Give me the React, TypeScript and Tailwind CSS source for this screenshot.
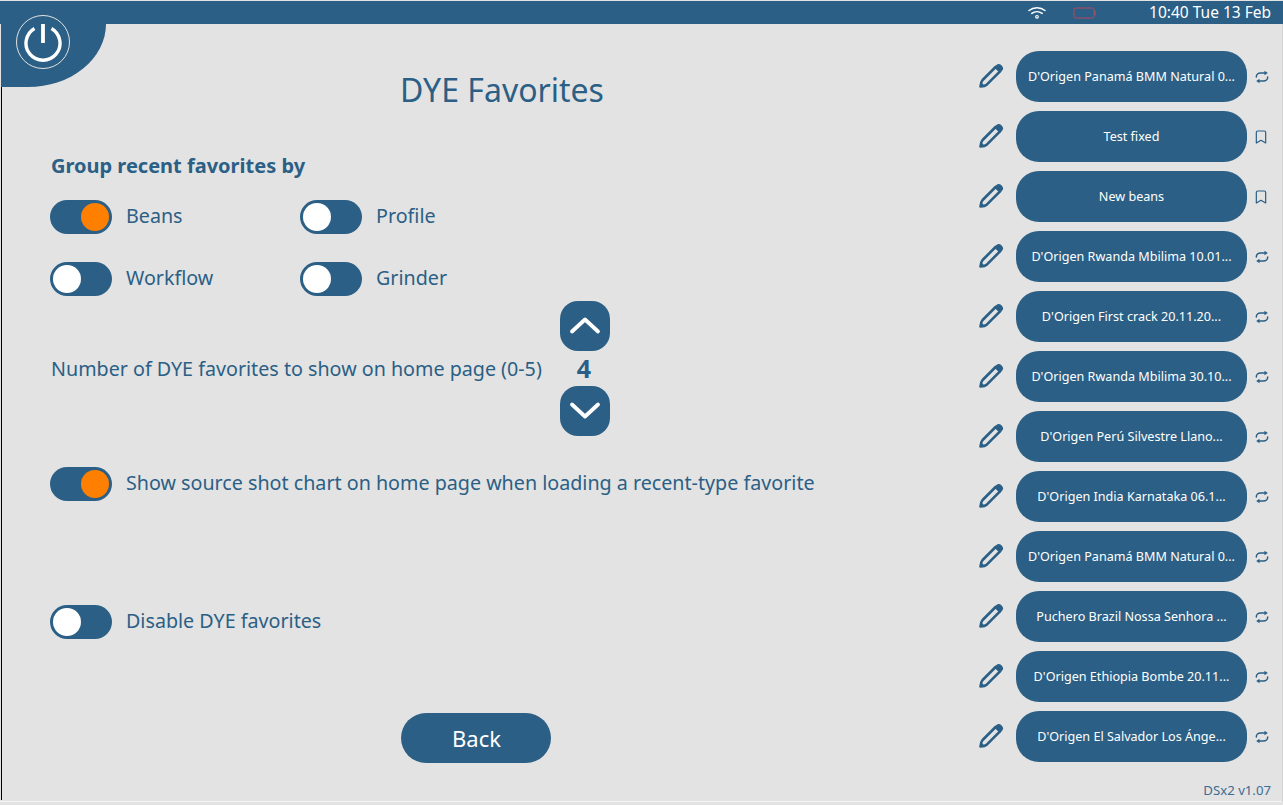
import React from 'react';
import { Bookmark } from 'lucide-react';

const favorites = [
  { name: "D'Origen Panamá BMM Natural 0...", type: 'recent' },
  { name: 'Test fixed', type: 'fixed' },
  { name: 'New beans', type: 'fixed' },
  { name: "D'Origen Rwanda Mbilima 10.01...", type: 'recent' },
  { name: "D'Origen First crack 20.11.20...", type: 'recent' },
  { name: "D'Origen Rwanda Mbilima 30.10...", type: 'recent' },
  { name: "D'Origen Perú Silvestre Llano...", type: 'recent' },
  { name: "D'Origen India Karnataka 06.1...", type: 'recent' },
  { name: "D'Origen Panamá BMM Natural 0...", type: 'recent' },
  { name: 'Puchero Brazil Nossa Senhora ...', type: 'recent' },
  { name: "D'Origen Ethiopia Bombe 20.11...", type: 'recent' },
  { name: "D'Origen El Salvador Los Ánge...", type: 'recent' },
];

const Toggle: React.FC<{ on?: boolean }> = ({ on }) => (
  <div className={`w-[62px] h-[34px] rounded-full bg-[#2b5f85] flex items-center px-[3px] shrink-0 ${on ? 'justify-end' : 'justify-start'}`}>
    <div className={`w-[28px] h-[28px] rounded-full ${on ? 'bg-[#ff8000]' : 'bg-white'}`}></div>
  </div>
);

const ToggleLabel: React.FC<{ on?: boolean; label: string; className?: string }> = ({ on, label, className }) => (
  <div className={`flex items-center gap-[14px] ${className ?? ''}`}>
    <Toggle on={on} />
    <span className="text-[19.7px] leading-[28px] pb-[2px] text-[#2b5f85]">{label}</span>
  </div>
);

const PencilIcon = () => (
  <svg width="27" height="27" viewBox="0 0 27 27" fill="none">
    <path d="M2.5 24.5C2.6 22 3.2 19.6 4.6 18L17.6 5 22 9.4 9 22.4C7.4 23.8 5 24.4 2.5 24.5Z" stroke="#2b5f85" strokeWidth="2.6" strokeLinejoin="round" />
    <path d="M18.5 2.9C19.8 1.6 21.6 1.6 23.2 3.1L24 3.9C25.5 5.4 25.5 7.2 24.2 8.6L22.3 10.4 16.7 4.8Z" fill="#2b5f85" />
    <path d="M2 25L3 20.5C4.2 21 6 22.8 6.5 24Z" fill="#2b5f85" />
  </svg>
);

const SyncIcon = () => (
  <svg width="14" height="14" viewBox="0 0 14 14" fill="none" stroke="#2b5f85" strokeWidth="1.5" strokeLinecap="round">
    <path d="M1.3 7C1.3 4.6 3.2 3 5.5 3H10" />
    <path d="M9.5 .8L12.8 3 9.5 5.2Z" fill="#2b5f85" stroke="none" />
    <path d="M12.7 7C12.7 9.4 10.8 11 8.5 11H4" />
    <path d="M4.5 8.8L1.2 11 4.5 13.2Z" fill="#2b5f85" stroke="none" />
  </svg>
);

const App: React.FC = () => {
  return (
    <div className="w-[1283px] h-[805px] bg-[#e3e3e3] relative overflow-hidden flex flex-col font-['Noto_Sans',sans-serif] text-[#2b5f85]">
      {/* top bar */}
      <div className="h-[23px] mt-px bg-[#2b5f85] flex items-center justify-end text-white shrink-0">
        <svg width="18" height="14" viewBox="0 0 18 14" fill="none" stroke="white" strokeWidth="1.5" strokeLinecap="round" className="mr-[27px]">
          <path d="M1 4.5C5.5 .8 12.5 .8 17 4.5" />
          <path d="M3.8 7.4C6.8 5.1 11.2 5.1 14.2 7.4" />
          <circle cx="9" cy="10.8" r="1.3" strokeWidth="1.2" />
        </svg>
        <svg width="24" height="12" viewBox="0 0 24 12" fill="none" className="mr-[52px]">
          <rect x="1" y="1" width="20" height="10" rx="1.5" stroke="#b5485f" strokeWidth="1" />
          <rect x="21.5" y="3.5" width="1.2" height="5" fill="#b5485f" />
        </svg>
        <span className="text-[15.5px] mr-[12px]">10:40 Tue 13 Feb</span>
      </div>

      {/* power corner */}
      <div className="absolute top-px left-px w-[105px] h-[86px] bg-[#2b5f85] rounded-br-[78px_63px] flex items-start">
        <div className="ml-[15px] mt-[14px] w-[54px] h-[54px] rounded-full border border-[#e3e3e3] flex items-center justify-center">
          <svg width="38" height="40" viewBox="0 0 38 40" fill="none" stroke="white" strokeWidth="3.4">
            <path d="M10.5 6.5A17 17 0 1 0 27.5 6.5" />
            <path d="M19 2V21" strokeWidth="3.8" />
          </svg>
        </div>
      </div>

      {/* screen edge lines */}
      <div className="absolute left-px top-[87px] bottom-[5px] w-px bg-black"></div>
      <div className="absolute left-0 right-0 bottom-[3px] h-px bg-[#f4f4f4]"></div>
      <div className="absolute right-0 top-[24px] bottom-[3px] w-px bg-[#d2d2d2]"></div>

      <div className="flex flex-1 min-h-0">
        {/* settings */}
        <div className="w-[970px] shrink-0 flex flex-col pl-[51px]">
          <h1 className="mt-[43px] text-center text-[32px] leading-[46px] ml-[-51px] pl-[34px]">DYE Favorites</h1>
          <div className="mt-[39px] text-[20px] leading-[28px] font-bold">Group recent favorites by</div>
          <div className="mt-[20px] grid grid-cols-[250px_250px] gap-y-[28px] ml-[-1px] w-fit">
            <ToggleLabel on label="Beans" />
            <ToggleLabel label="Profile" />
            <ToggleLabel label="Workflow" />
            <ToggleLabel label="Grinder" />
          </div>
          <div className="mt-[5px] flex items-center">
            <span className="text-[19.7px] leading-[28px] w-[509px]">Number of DYE favorites to show on home page (0-5)</span>
            <div className="flex flex-col items-center w-[50px]">
              <div className="w-[50px] h-[50px] rounded-[18px] bg-[#2b5f85] flex items-center justify-center">
                <svg width="34" height="20" viewBox="0 0 34 20" fill="none" stroke="white" strokeWidth="3.8" strokeLinecap="round" strokeLinejoin="round">
                  <path d="M4 15.5L17 3.5 30 15.5" />
                </svg>
              </div>
              <div className="h-[35px] pr-[2px] flex items-center text-[25px] font-bold">4</div>
              <div className="w-[50px] h-[50px] rounded-[18px] bg-[#2b5f85] flex items-center justify-center">
                <svg width="34" height="20" viewBox="0 0 34 20" fill="none" stroke="white" strokeWidth="3.8" strokeLinecap="round" strokeLinejoin="round">
                  <path d="M4 3.5L17 15.5 30 3.5" />
                </svg>
              </div>
            </div>
          </div>
          <ToggleLabel on label="Show source shot chart on home page when loading a recent-type favorite" className="mt-[31px] ml-[-1px]" />
          <ToggleLabel label="Disable DYE favorites" className="mt-[104px] ml-[-1px]" />
          <div className="mt-[74px] ml-[350px] w-[150px] h-[50px] pl-px rounded-[25px] bg-[#2b5f85] text-white text-[22px] flex items-center justify-center">Back</div>
        </div>

        {/* favorites list */}
        <div className="flex-1 flex flex-col pt-[27px] gap-[9px]">
          {favorites.map((f, i) => (
            <div key={i} className="flex items-center h-[51px]">
              <div className="w-[46px] flex justify-end pr-[11px] pb-[2px]">
                <PencilIcon />
              </div>
              <div className="w-[231px] h-[51px] pt-px rounded-[23px] bg-[#2b5f85] text-white text-[12.6px] flex items-center justify-center whitespace-nowrap">{f.name}</div>
              <div className={`flex-1 flex justify-center ml-[1px] ${f.type === 'recent' ? 'pr-[8px]' : 'pr-[10px]'}`}>
                {f.type === 'recent'
                  ? <SyncIcon />
                  : <Bookmark size={16} strokeWidth={1.8} color="#2b5f85" />}
              </div>
            </div>
          ))}
          <div className="text-right text-[13.2px] pr-[12px] mt-[10px] text-[#3d6d92]">DSx2 v1.07</div>
        </div>
      </div>
    </div>
  );
};

export default App;
